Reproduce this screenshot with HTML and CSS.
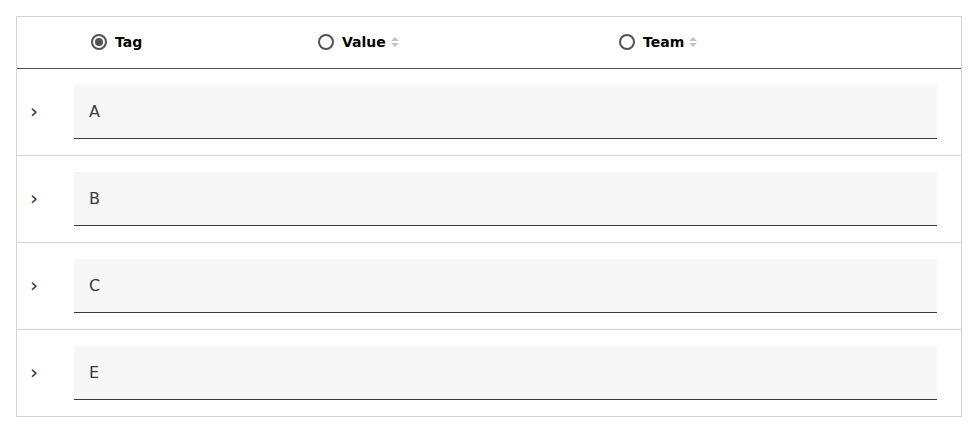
FILE: index.html
```html
<!DOCTYPE html>
<html lang="en">
<head>
  <meta charset="UTF-8" />
  <meta name="viewport" content="width=device-width, initial-scale=1.0">
  <title>Tag table</title>
  <link rel="stylesheet" href="styles.css">
</head>
<body>
  <div class="table">
    <div class="head">
      <div class="cell-expand"></div>
      <label class="col col-tag">
        <span class="radio checked"></span>
        <span class="label">Tag</span>
      </label>
      <label class="col col-value">
        <span class="radio"></span>
        <span class="label">Value</span>
        <span class="sort"></span>
      </label>
      <label class="col col-team">
        <span class="radio"></span>
        <span class="label">Team</span>
        <span class="sort"></span>
      </label>
    </div>

    <div class="row">
      <div class="cell-expand"><span class="chevron">›</span></div>
      <div class="field">A</div>
    </div>
    <div class="row">
      <div class="cell-expand"><span class="chevron">›</span></div>
      <div class="field">B</div>
    </div>
    <div class="row">
      <div class="cell-expand"><span class="chevron">›</span></div>
      <div class="field">C</div>
    </div>
    <div class="row">
      <div class="cell-expand"><span class="chevron">›</span></div>
      <div class="field">E</div>
    </div>
  </div>
</body>
</html>
```

FILE: styles.css
```css
* { margin: 0; padding: 0; box-sizing: border-box; }
body {
  font-family: "DejaVu Sans", sans-serif;
  background: #fff;
  color: #161616;
  padding: 16px 16px 0 16px;
}
.table {
  width: 946px;
  border: 1px solid #d4d4d4;
}
.head {
  display: grid;
  grid-template-columns: 57px 227px 301px 1fr;
  height: 52px;
  padding-bottom: 2px;
  border-bottom: 1px solid #525252;
  align-items: center;
}
.col {
  display: flex;
  align-items: center;
  padding-left: 17px;
}
.radio {
  width: 16px;
  height: 16px;
  border: 2px solid #525252;
  border-radius: 50%;
  margin-right: 8px;
  position: relative;
}
.radio.checked::after {
  content: "";
  position: absolute;
  left: 2px;
  top: 2px;
  width: 8px;
  height: 8px;
  border-radius: 50%;
  background: #525252;
}
.label {
  font-size: 14px;
  font-weight: bold;
  color: #000;
}
.sort {
  display: inline-flex;
  flex-direction: column;
  gap: 2px;
  margin-left: 5px;
}
.sort::before,
.sort::after {
  content: "";
  width: 0;
  height: 0;
  border-left: 4px solid transparent;
  border-right: 4px solid transparent;
}
.sort::before { border-bottom: 4px solid #c6c6c6; }
.sort::after { border-top: 4px solid #c6c6c6; }
.row {
  display: flex;
  height: 87px;
  padding: 16px 24px 16px 0;
  border-bottom: 1px solid #d4d4d4;
}
.row:last-child { border-bottom: none; height: 86px; }
.cell-expand {
  width: 57px;
  display: flex;
  align-items: center;
  padding-left: 13px;
}
.chevron {
  font-size: 20px;
  color: #393939;
  line-height: 1;
  margin-top: -2px;
}
.field {
  flex: 1;
  height: 54px;
  background: #f7f7f7;
  border-bottom: 1px solid #393939;
  display: flex;
  align-items: center;
  padding-left: 15px;
  font-size: 16px;
  color: #393939;
}
```
